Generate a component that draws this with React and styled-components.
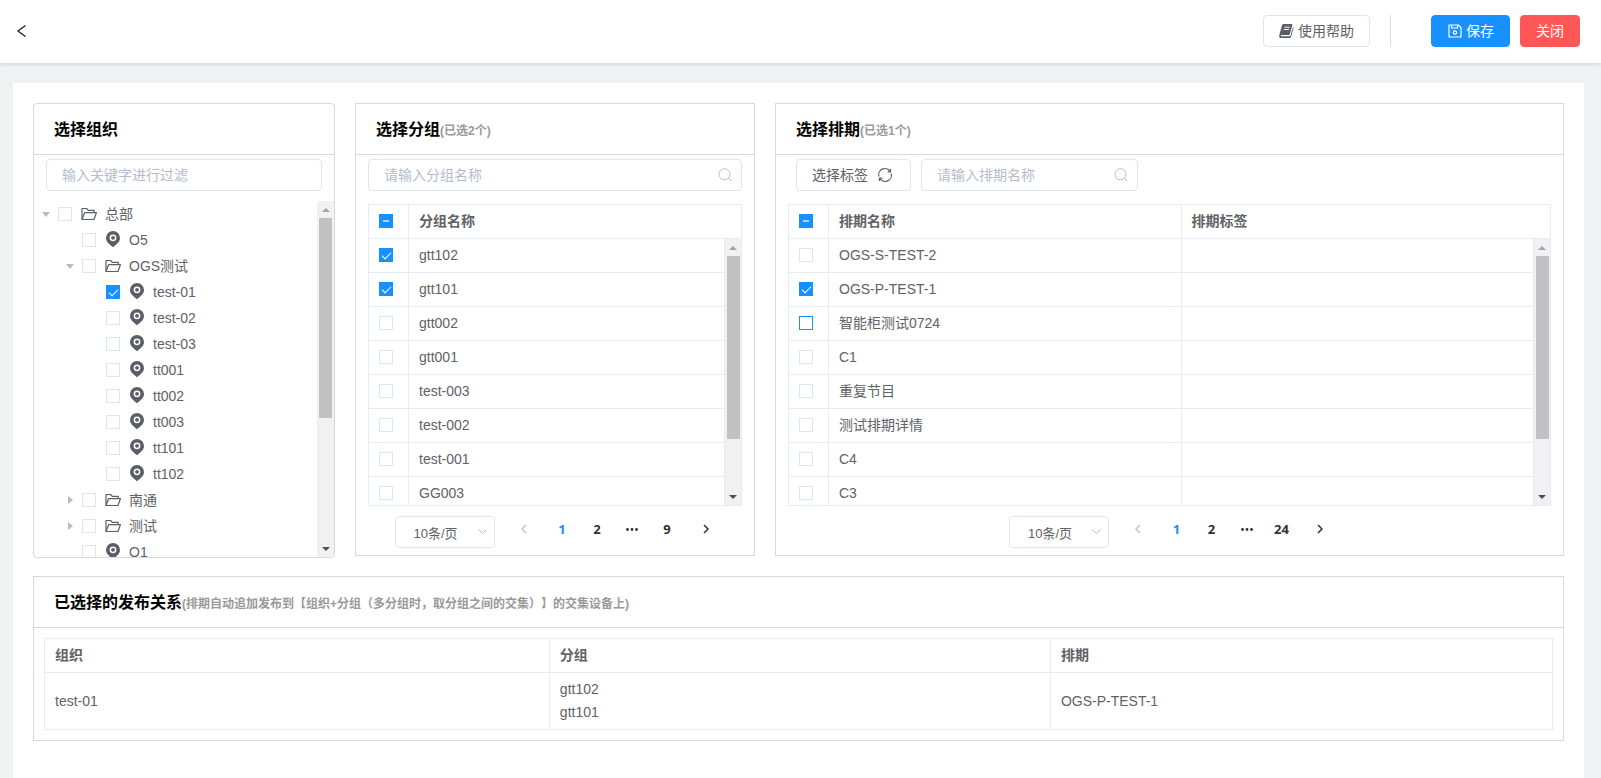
import React from "react";
import styled, { createGlobalStyle, css } from "styled-components";

const GlobalStyle = createGlobalStyle`
  * {
    box-sizing: border-box;
  }
  body {
    margin: 0;
    background-color: #eef2f3;
    color: #606266;
    font-family: "Liberation Sans", "Noto Sans CJK SC", sans-serif;
    font-size: 14px;
  }
  button, input, select {
    font-family: inherit;
    font-size: inherit;
  }
`;

const Page = styled.div`
  display: flex;
  flex-direction: column;
  min-height: 100vh;
`;

const Header = styled.header`
  display: flex;
  align-items: center;
  justify-content: space-between;
  height: 63px;
  padding: 0 21px 2px 16px;
  background-color: #fff;
  box-shadow: 0 1px 4px rgba(0, 21, 41, 0.15);
`;

const BackButton = styled.button`
  display: flex;
  padding: 0;
  border: none;
  background: none;
  color: #1f2329;
  cursor: pointer;
`;

const Actions = styled.div`
  display: flex;
  align-items: center;
`;

const Divider = styled.span`
  width: 1px;
  height: 32px;
  margin: 0 40px 0 20px;
  background-color: #d9dde0;
`;

const kinds = {
  plain: css`
    border-color: #dfe6e9;
    background-color: #fff;
    color: #606266;
  `,
  primary: css`
    border-color: #1890ff;
    background-color: #1890ff;
    color: #fff;
  `,
  danger: css`
    border-color: #ff5757;
    background-color: #ff5757;
    color: #fff;
  `,
};

const Button = styled.button`
  display: flex;
  align-items: center;
  gap: ${(props) => props.$gap || 4}px;
  height: 32px;
  padding: 0 15px;
  border: 1px solid;
  border-radius: 4px;
  line-height: 20px;
  white-space: nowrap;
  cursor: pointer;
  ${(props) => kinds[props.$kind || "plain"]}

  & + & {
    margin-left: 10px;
  }
`;

const Main = styled.main`
  flex: 1;
  margin: 20px 17px 0 13px;
  padding: 20px;
  background-color: #fff;
`;

const Columns = styled.div`
  display: grid;
  grid-template-columns: 302px 400px minmax(0, 1fr);
  gap: 20px;
  align-items: start;
  margin-bottom: 18px;
`;

const Panel = styled.section`
  border: 1px solid #d9d9d9;
  border-radius: ${(props) => (props.$round ? 4 : 0)}px;
  overflow: hidden;
`;

const PanelHead = styled.div`
  display: flex;
  align-items: baseline;
  height: 51px;
  padding-left: 20px;
  border-bottom: 1px solid #d9d9d9;
  line-height: 52px;
`;

const Title = styled.h2`
  margin: 0;
  color: #000;
  font-size: 16px;
  font-weight: bold;
`;

const Note = styled.span`
  color: #999;
  font-size: 12px;
  font-weight: bold;
  text-spacing-trim: space-all;
`;

const Toolbar = styled.div`
  display: flex;
  gap: 10px;
  padding: 4px 12px 0 ${(props) => (props.$indent ? 20 : 12)}px;
`;

const Field = styled.div`
  position: relative;
  flex: ${(props) => (props.$width ? "none" : 1)};
  width: ${(props) => (props.$width ? `${props.$width}px` : "auto")};

  svg {
    position: absolute;
    top: 9px;
    right: 10px;
    color: #b4bccc;
  }
`;

const TextInput = styled.input`
  display: block;
  width: 100%;
  height: 32px;
  padding: 0 15px;
  border: 1px solid #dfe6e9;
  border-radius: 4px;
  outline: none;
  color: #606266;

  &::placeholder {
    color: #b4bccc;
  }
`;

const CheckInput = styled.input`
  appearance: none;
  flex: none;
  display: block;
  position: relative;
  width: 14px;
  height: 14px;
  margin: 0;
  border: 1px solid ${(props) => (props.$active ? "#1890ff" : "#dfe6e9")};
  background-color: #fff;
  cursor: pointer;

  td &,
  th & {
    margin-bottom: 1px;
  }
  &:checked,
  &:indeterminate {
    border-color: #1890ff;
    background-color: #1890ff;
  }
  &:checked::after {
    content: "";
    position: absolute;
    top: 1px;
    left: 4px;
    width: 4px;
    height: 8px;
    border: solid #fff;
    border-width: 0 1px 1px 0;
    transform: rotate(45deg);
  }
  &:indeterminate::after {
    content: "";
    position: absolute;
    top: 5px;
    left: 3px;
    width: 6px;
    height: 2px;
    background-color: #a3d3ff;
  }
`;

const ScrollBox = styled.div`
  display: flex;
  height: ${(props) => props.$height}px;
  margin-top: ${(props) => props.$top || 0}px;
`;

const ScrollContent = styled.div`
  flex: 1;
  min-width: 0;
  overflow-y: auto;
  scrollbar-width: none;
`;

const Track = styled.div`
  display: flex;
  flex-direction: column;
  width: ${(props) => props.$width}px;
  background-color: #f1f1f1;
`;

const TrackEnd = styled.span`
  display: flex;
  align-items: center;
  justify-content: center;
  height: 17px;

  &::before {
    content: "";
    border: 4px solid transparent;
    ${(props) =>
      props.$down
        ? "border-top-color: #505050; border-bottom-width: 0;"
        : "border-bottom-color: #a3a3a3; border-top-width: 0;"}
  }
`;

const TrackBody = styled.div`
  flex: 1;
  padding-left: 2px;
`;

const Thumb = styled.div`
  width: 13px;
  height: ${(props) => props.$size}%;
  background-color: #c1c1c1;
`;

const Tree = styled.ul`
  margin: 0;
  padding: 0;
  list-style: none;
`;

const TreeRow = styled.li`
  display: flex;
  align-items: center;
  height: 26px;
  padding-left: ${(props) => props.$level * 24}px;
  line-height: 26px;
`;

const Toggle = styled.button`
  display: flex;
  align-items: center;
  justify-content: center;
  width: 24px;
  height: 26px;
  padding: 0;
  border: none;
  background: none;

  &::before {
    content: "";
    border: 4px solid transparent;
    ${(props) =>
      props.$open
        ? "border-top: 5px solid #b4bccc; border-bottom-width: 0;"
        : "border-left: 5px solid #b4bccc; border-right-width: 0;"}
  }
`;

const TogglePlace = styled.span`
  width: 24px;
`;

const TreeLabel = styled.label`
  display: flex;
  align-items: center;
  cursor: pointer;

  svg {
    width: 16px;
    margin: 0 8px 0 9px;
  }
`;

const TableBox = styled.div`
  margin: ${(props) => props.$margin};
  border: 1px solid #e6ebf5;
`;

const Table = styled.table`
  width: 100%;
  border-collapse: separate;
  border-spacing: 0;
  table-layout: fixed;
`;

const Th = styled.th`
  height: 34px;
  padding: 0 10px;
  border-bottom: 1px solid #e6ebf5;
  font-weight: bold;
  line-height: 23px;
  text-align: left;

  &:not(:last-child) {
    border-right: ${(props) => (props.$open ? "none" : "1px solid #e6ebf5")};
  }
`;

const Td = styled.td`
  height: 34px;
  padding: ${(props) => (props.$tall ? "5px 10px" : "0 10px")};
  border-right: 1px solid #e6ebf5;
  border-bottom: 1px solid #e6ebf5;
  line-height: 23px;

  ${(props) =>
    props.$tall &&
    css`
      border-bottom: none;
      &:last-child {
        border-right: none;
      }
    `}
`;

const Col = styled.col`
  width: ${(props) => props.$width};
`;

const Pagination = styled.nav`
  display: flex;
  justify-content: center;
  align-items: flex-start;
  padding: 10px 0 7px 8px;
`;

const SelectBox = styled.div`
  position: relative;
  margin-right: 11px;

  svg {
    position: absolute;
    top: 13px;
    right: 8px;
    color: #b4bccc;
    pointer-events: none;
  }
`;

const Select = styled.select`
  appearance: none;
  display: block;
  width: 100px;
  height: 32px;
  padding: 2px 25px 0 18px;
  border: 1px solid #dfe6e9;
  border-radius: 4px;
  background-color: #fff;
  color: #606266;
  font-size: 13px;
`;

const PageButton = styled.button`
  display: flex;
  align-items: center;
  justify-content: center;
  width: 35px;
  height: 26px;
  margin: ${(props) => props.$margin || 0};
  padding: 0;
  border: none;
  background: none;
  color: ${(props) => (props.$current ? "#1890ff" : "#303133")};
  font-family: "Open Sans", sans-serif;
  font-size: 13px;
  font-weight: bold;
  cursor: pointer;

  &:disabled {
    color: #c0c4cc;
  }
`;

const Chevron = ({ points, width, height, stroke = 1 }) => (
  <svg width={width} height={height} viewBox={`0 0 ${width} ${height}`} fill="none" stroke="currentColor" strokeWidth={stroke}>
    <polyline points={points} />
  </svg>
);

const FolderIcon = () => (
  <svg width="16" height="14" viewBox="0 0 16 14" fill="none" stroke="#5a5e66" strokeWidth="1.2" strokeLinejoin="round">
    <path d="M1 12.5V1.5h4.6l1.6 1.8h6v2.4" />
    <path d="M1 12.5 3.6 5.7h11.8l-2.4 6.8z" />
  </svg>
);

const PinIcon = () => (
  <svg width="16" height="18" viewBox="0 0 16 18">
    <path
      fill="#5a5e66"
      fillRule="evenodd"
      d="M8 0a7 7 0 0 0-7 7c0 3.600 3 6 7 9.200 4-3.200 7-5.600 7-9.200a7 7 0 0 0-7-7zm0 3.400a3.400 3.400 0 1 1 0 6.800 3.400 3.400 0 0 1 0-6.800z"
    />
    <circle cx="8" cy="6.800" r="1.900" fill="#5a5e66" />
  </svg>
);

const BookIcon = () => (
  <svg width="15" height="14" viewBox="0 0 16 14" preserveAspectRatio="none">
    <path fill="#5a5e66" d="M5 0h8.200c.8 0 1.200.6 1 1.300L11.600 10c-.2.600-.7 1-1.300 1H2.600c-.8 0-1 1.300 0 1.300h8.700c.5 0 .9-.3 1-.7L15 3.100c.5.300.7.800.5 1.400l-2.600 8.300c-.2.700-.9 1.200-1.600 1.200H2.200C.9 14-.2 12.700.2 11.400L3.200 1.300C3.400.600 4.100 0 5 0z" />
    <path stroke="#fff" strokeWidth="1" d="M5.800 3.200h5.600M5.100 5.500h5.600" />
  </svg>
);

const SaveIcon = () => (
  <svg width="15" height="14" viewBox="-1 0 15 14" fill="none" stroke="currentColor" strokeWidth="1.2">
    <path d="M1 1h9.500L13 3.500V13H1z" />
    <path d="M3.600 1v3h6V1" />
    <circle cx="7" cy="8.500" r="1.700" />
  </svg>
);

const SearchIcon = () => (
  <svg width="14" height="14" viewBox="0 0 14 14" fill="none" stroke="currentColor">
    <circle cx="6.500" cy="6.300" r="5.500" />
    <path d="M10.400 10.200 13.400 13.200" />
  </svg>
);

const RefreshIcon = () => (
  <svg width="20" height="20" viewBox="-3 -3 20 20" fill="none" stroke="currentColor" strokeWidth="1.200">
    <path d="M.9 8.500A6.200 6.200 0 0 1 12 3.300M13.100 5.500A6.200 6.200 0 0 1 2 10.700" />
    <path d="M12.500 1v2.800H9.700M1.500 13v-2.800h2.800" />
  </svg>
);

const Checkbox = ({ mixed, ...rest }) => (
  <CheckInput
    type="checkbox"
    ref={(el) => {
      if (el) el.indeterminate = !!mixed;
    }}
    {...rest}
  />
);

const ScrollArea = ({ height, top, thumb, track = 17, children }) => (
  <ScrollBox $height={height} $top={top}>
    <ScrollContent>{children}</ScrollContent>
    <Track $width={track} aria-hidden="true">
      <TrackEnd />
      <TrackBody>
        <Thumb $size={thumb} />
      </TrackBody>
      <TrackEnd $down />
    </Track>
  </ScrollBox>
);

const nodes = [
  { name: "总部", level: 0, folder: true, open: true },
  { name: "O5", level: 1 },
  { name: "OGS测试", level: 1, folder: true, open: true },
  { name: "test-01", level: 2, checked: true },
  { name: "test-02", level: 2 },
  { name: "test-03", level: 2 },
  { name: "tt001", level: 2 },
  { name: "tt002", level: 2 },
  { name: "tt003", level: 2 },
  { name: "tt101", level: 2 },
  { name: "tt102", level: 2 },
  { name: "南通", level: 1, folder: true },
  { name: "测试", level: 1, folder: true },
  { name: "O1", level: 1 },
];

const groups = [
  { name: "gtt102", checked: true },
  { name: "gtt101", checked: true },
  { name: "gtt002" },
  { name: "gtt001" },
  { name: "test-003" },
  { name: "test-002" },
  { name: "test-001" },
  { name: "GG003" },
];

const schedules = [
  { name: "OGS-S-TEST-2" },
  { name: "OGS-P-TEST-1", checked: true },
  { name: "智能柜测试0724", active: true },
  { name: "C1" },
  { name: "重复节目" },
  { name: "测试排期详情" },
  { name: "C4" },
  { name: "C3" },
];

const PickTable = ({ columns, rows }) => (
  <TableBox $margin="13px 12px 0">
    <Table>
      <colgroup>
        <Col $width="40px" />
        {columns.map((name) => (
          <col key={name} />
        ))}
        <Col $width="16px" />
      </colgroup>
      <thead>
        <tr>
          <Th>
            <Checkbox mixed aria-label="全选" />
          </Th>
          {columns.map((name, i) => (
            <Th key={name} $open={i === columns.length - 1}>
              {name}
            </Th>
          ))}
          <Th as="td" />
        </tr>
      </thead>
    </Table>
    <ScrollArea height={266} thumb={79} track={16}>
      <Table>
        <colgroup>
          <Col $width="40px" />
          {columns.map((name) => (
            <col key={name} />
          ))}
        </colgroup>
        <tbody>
          {rows.map((row) => (
            <tr key={row.name}>
              <Td>
                <Checkbox
                  defaultChecked={row.checked}
                  $active={row.active}
                  aria-label={row.name}
                />
              </Td>
              <Td>{row.name}</Td>
              {columns.length > 1 && <Td />}
            </tr>
          ))}
        </tbody>
      </Table>
    </ScrollArea>
  </TableBox>
);

const Pager = ({ last }) => (
  <Pagination aria-label="分页">
    <SelectBox>
      <Select aria-label="每页条数">
        <option>10条/页</option>
      </Select>
      <Chevron width={9} height={6} points="0.5,0.5 4.5,4.5 8.5,0.5" />
    </SelectBox>
    <PageButton $margin="0 4px 0 0" disabled aria-label="上一页">
      <Chevron width={7} height={10} stroke={1.5} points="6,1 2,5 6,9" />
    </PageButton>
    <PageButton $current>1</PageButton>
    <PageButton>2</PageButton>
    <PageButton aria-label="更多">
      <svg width="12" height="3" viewBox="0 0 12 3" fill="currentColor">
        <circle cx="1.500" cy="1.500" r="1.400" />
        <circle cx="6" cy="1.500" r="1.400" />
        <circle cx="10.500" cy="1.500" r="1.400" />
      </svg>
    </PageButton>
    <PageButton>{last}</PageButton>
    <PageButton $margin="0 0 0 4px" aria-label="下一页">
      <Chevron width={7} height={10} stroke={1.5} points="1,1 5,5 1,9" />
    </PageButton>
  </Pagination>
);

export default function App() {
  return (
    <Page>
      <GlobalStyle />
      <Header>
        <BackButton aria-label="返回">
          <Chevron width={12} height={12} stroke={1.3} points="9.5,0.5 2,6 9.5,11.5" />
        </BackButton>
        <Actions>
          <Button>
            <BookIcon />
            使用帮助
          </Button>
          <Divider />
          <Button $kind="primary">
            <SaveIcon />
            保存
          </Button>
          <Button $kind="danger">关闭</Button>
        </Actions>
      </Header>
      <Main>
        <Columns>
          <Panel $round>
            <PanelHead>
              <Title>选择组织</Title>
            </PanelHead>
            <Toolbar>
              <Field>
                <TextInput aria-label="过滤组织" placeholder="输入关键字进行过滤" />
              </Field>
            </Toolbar>
            <ScrollArea height={356} top={10} thumb={62}>
              <Tree>
                {nodes.map((node) => (
                  <TreeRow key={node.name} $level={node.level}>
                    {node.folder ? (
                      <Toggle $open={node.open} aria-label={`展开${node.name}`} />
                    ) : (
                      <TogglePlace />
                    )}
                    <TreeLabel>
                      <Checkbox defaultChecked={node.checked} />
                      {node.folder ? <FolderIcon /> : <PinIcon />}
                      {node.name}
                    </TreeLabel>
                  </TreeRow>
                ))}
              </Tree>
            </ScrollArea>
          </Panel>
          <Panel>
            <PanelHead>
              <Title>选择分组</Title>
              <Note>(已选2个)</Note>
            </PanelHead>
            <Toolbar>
              <Field>
                <TextInput aria-label="分组名称" placeholder="请输入分组名称" />
                <SearchIcon />
              </Field>
            </Toolbar>
            <PickTable columns={["分组名称"]} rows={groups} />
            <Pager last={9} />
          </Panel>
          <Panel>
            <PanelHead>
              <Title>选择排期</Title>
              <Note>(已选1个)</Note>
            </PanelHead>
            <Toolbar $indent>
              <Button $gap={7}>
                选择标签
                <RefreshIcon />
              </Button>
              <Field $width={217}>
                <TextInput aria-label="排期名称" placeholder="请输入排期名称" />
                <SearchIcon />
              </Field>
            </Toolbar>
            <PickTable columns={["排期名称", "排期标签"]} rows={schedules} />
            <Pager last={24} />
          </Panel>
        </Columns>
        <Panel>
          <PanelHead>
            <Title>已选择的发布关系</Title>
            <Note>
              (排期自动追加发布到【组织+分组（多分组时，取分组之间的交集）】的交集设备上)
            </Note>
          </PanelHead>
          <TableBox $margin="10px">
            <Table>
              <colgroup>
                <Col $width="33.5%" />
                <col />
                <col />
              </colgroup>
              <thead>
                <tr>
                  <Th>组织</Th>
                  <Th>分组</Th>
                  <Th>排期</Th>
                </tr>
              </thead>
              <tbody>
                <tr>
                  <Td $tall>test-01</Td>
                  <Td $tall>
                    <div>gtt102</div>
                    <div>gtt101</div>
                  </Td>
                  <Td $tall>OGS-P-TEST-1</Td>
                </tr>
              </tbody>
            </Table>
          </TableBox>
        </Panel>
      </Main>
    </Page>
  );
}
